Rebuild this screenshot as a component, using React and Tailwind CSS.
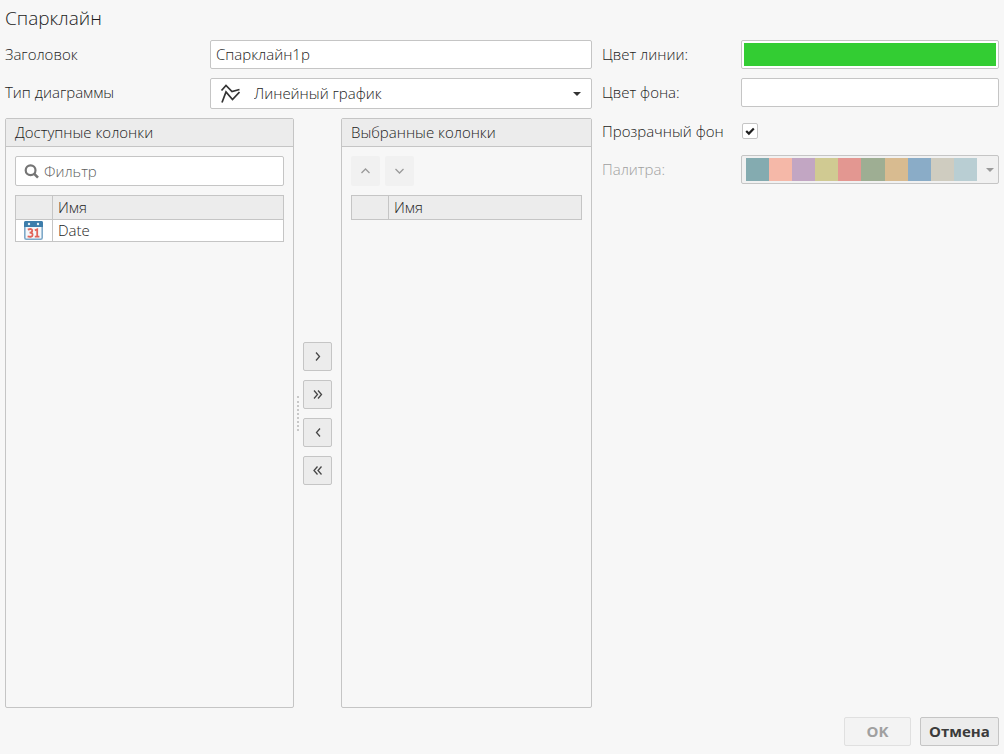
import { useState } from "react";

const paletteColors = [
  "bg-[#84abb0]",
  "bg-[#f5b8a8]",
  "bg-[#c2a6c3]",
  "bg-[#d0ca92]",
  "bg-[#e39791]",
  "bg-[#9eae93]",
  "bg-[#d8bb90]",
  "bg-[#8aacc7]",
  "bg-[#cfccc0]",
  "bg-[#b9ced3]",
];

const arrows = {
  right: "M5 3.5 L8.5 7.5 L5 11.5",
  doubleRight: "M3 3.5 L6.5 7.5 L3 11.5 M7 3.5 L10.5 7.5 L7 11.5",
  left: "M9 3.5 L5.5 7.5 L9 11.5",
  doubleLeft: "M6.5 3.5 L3 7.5 L6.5 11.5 M10.5 3.5 L7 7.5 L10.5 11.5",
  up: "M2.5 9 L6.5 5 L10.5 9",
  down: "M2.5 5 L6.5 9 L10.5 5",
};

const Arrow = ({ name }) => (
  <svg width="14" height="14" viewBox="0 0 14 14" fill="none" stroke="currentColor" strokeWidth="1.3">
    <path d={arrows[name]} />
  </svg>
);

const Caret = () => (
  <svg width="8" height="4" viewBox="0 0 8 4" fill="currentColor">
    <path d="M0 0 H8 L4 4 Z" />
  </svg>
);

const SearchIcon = () => (
  <svg width="15" height="15" viewBox="0 0 15 15" fill="none" stroke="currentColor" strokeWidth="2.2">
    <circle cx="6.6" cy="6.2" r="4.9" />
    <path d="M10 9.6 L14 13.6" strokeWidth="2.6" />
  </svg>
);

const LineChartIcon = () => (
  <svg width="20" height="20" viewBox="0 0 20 20" fill="none" stroke="currentColor" strokeWidth="1.7">
    <path d="M1.5 6.5 L6 1.5 L12 7.5 L19.5 5.5" />
    <path d="M2 18.5 L6 8 L12.5 15.5 L19.5 8" />
  </svg>
);

const CalendarIcon = () => (
  <svg className="mx-auto" width="19" height="19" viewBox="0 0 19 19">
    <rect x="0.8" y="0.8" width="17.4" height="17.4" rx="1.5" fill="#f4f7fa" stroke="#7fa9c9" strokeWidth="1.6" />
    <path d="M0 1.5 Q0 0 1.5 0 H17.5 Q19 0 19 1.5 V6 H0 Z" fill="#3d7dab" />
    <circle cx="5" cy="3" r="1.2" fill="#e8f0f6" />
    <circle cx="14" cy="3" r="1.2" fill="#e8f0f6" />
    <path
      d="M3.8 8.6 Q8.2 7 8.2 9.7 Q8.2 11.6 5.6 11.7 Q8.8 11.8 8.6 13.8 Q8.3 16.6 3.6 15.4"
      fill="none"
      stroke="#e2645a"
      strokeWidth="1.8"
    />
    <path d="M10.8 9.4 L13.2 8.3 V15.8 M10.8 15.7 H15.4" fill="none" stroke="#e2645a" strokeWidth="1.8" />
  </svg>
);

const MoveButton = ({ name, label }) => (
  <button
    type="button"
    aria-label={label}
    className="flex h-[29px] w-[29px] items-center justify-center rounded-xs border border-[#c5c5c5] bg-[#ececec] text-[#474747]"
  >
    <Arrow name={name} />
  </button>
);

const SortButton = ({ name, label }) => (
  <button
    type="button"
    disabled
    aria-label={label}
    className="flex h-[30px] w-[29px] items-center justify-center rounded-xs bg-[#f1f1f1] text-[#9a9a9a]"
  >
    <Arrow name={name} />
  </button>
);

const ColumnTable = ({ rows }) => (
  <table className="w-full table-fixed border-collapse border border-[#c5c5c5] text-left">
    <thead>
      <tr className="h-6 bg-[#ececec]">
        <th className="w-[37px] border border-[#c5c5c5]"></th>
        <th className="border border-[#c5c5c5] px-[5px] leading-[21px] font-light">Имя</th>
      </tr>
    </thead>
    <tbody>
      {rows.map((row) => (
        <tr key={row} className="bg-white">
          <td className="border border-[#c5c5c5] pr-[2px]">
            <CalendarIcon />
          </td>
          <td className="border border-[#c5c5c5] px-[5px] leading-[21px]">{row}</td>
        </tr>
      ))}
    </tbody>
  </table>
);

const Panel = ({ title, className, children }) => (
  <section className={`flex flex-col rounded-xs border border-[#c5c5c5] ${className}`}>
    <h2 className="border-b border-[#c5c5c5] bg-[#ececec] px-[9px] leading-[27px]">{title}</h2>
    <div className="flex flex-col gap-[9px] p-[9px]">{children}</div>
  </section>
);

const App = () => {
  const [title, setTitle] = useState("Спарклайн1р");
  const [filter, setFilter] = useState("");
  const [lineColor, setLineColor] = useState("#33cd33");
  const [background, setBackground] = useState("#ffffff");
  const [transparent, setTransparent] = useState(true);

  const field = "w-full rounded-xs border border-[#c5c5c5] bg-white";
  const colorField =
    "block h-[29px] w-full rounded-xs border border-[#c5c5c5] bg-white p-[2px] [&::-webkit-color-swatch]:rounded-none [&::-webkit-color-swatch]:border-0 [&::-webkit-color-swatch-wrapper]:p-0";

  return (
    <form className="flex h-screen flex-col bg-[#f7f7f7] px-[5px] pb-2 font-['Open_Sans',sans-serif] text-[15px] font-light text-[#1c1c1c]">
      <h1 className="h-10 text-[19px] leading-[37px]">Спарклайн</h1>

      <div className="flex min-h-0 flex-1 gap-[10px]">
        <div className="flex flex-1 flex-col gap-[9px]">
          <div className="flex h-[29px] items-center">
            <label htmlFor="title" className="w-[205px]">Заголовок</label>
            <div className="flex-1">
              <input
                id="title"
                value={title}
                onChange={(e) => setTitle(e.target.value)}
                className={`${field} block h-[29px] px-[5px] pb-[2px]`}
              />
            </div>
          </div>

          <div className="flex h-[31px]">
            <label htmlFor="type" className="w-[205px] leading-[29px]">Тип диаграммы</label>
            <div className="relative flex-1">
              <select id="type" className={`${field} block h-[31px] appearance-none pl-[43px]`}>
                <option>Линейный график</option>
              </select>
              <span className="pointer-events-none absolute inset-y-0 left-[10px] flex items-center text-[#333333]">
                <LineChartIcon />
              </span>
              <span className="pointer-events-none absolute inset-y-0 right-[11px] flex items-center text-[#333333]">
                <Caret />
              </span>
            </div>
          </div>

          <div className="flex min-h-0 flex-1">
            <Panel title="Доступные колонки" className="w-[289px]">
              <div className="relative">
                <input
                  aria-label="Фильтр"
                  placeholder="Фильтр"
                  value={filter}
                  onChange={(e) => setFilter(e.target.value)}
                  className={`${field} block h-[30px] pr-2 pl-7 placeholder:text-[#606060]`}
                />
                <span className="pointer-events-none absolute inset-y-0 left-[9px] flex items-center text-[#757575]">
                  <SearchIcon />
                </span>
              </div>
              <ColumnTable rows={["Date"]} />
            </Panel>

            <div className="flex w-[47px] items-center gap-1 pl-[3px]">
              <div className="h-[35px] border-l-2 border-dotted border-[#c8c8c8]"></div>
              <div className="flex flex-col gap-[9px]">
                <MoveButton name="right" label="Добавить" />
                <MoveButton name="doubleRight" label="Добавить все" />
                <MoveButton name="left" label="Убрать" />
                <MoveButton name="doubleLeft" label="Убрать все" />
              </div>
            </div>

            <Panel title="Выбранные колонки" className="flex-1">
              <div className="flex gap-[5px]">
                <SortButton name="up" label="Вверх" />
                <SortButton name="down" label="Вниз" />
              </div>
              <ColumnTable rows={[]} />
            </Panel>
          </div>
        </div>

        <div className="flex w-[397px] flex-col gap-[9px]">
          <div className="flex h-[29px] items-center">
            <label htmlFor="line-color" className="w-[139px]">Цвет линии:</label>
            <div className="flex-1">
              <input
                id="line-color"
                type="color"
                value={lineColor}
                onChange={(e) => setLineColor(e.target.value)}
                className={colorField}
              />
            </div>
          </div>

          <div className="flex h-[29px] items-center">
            <label htmlFor="background" className="w-[139px]">Цвет фона:</label>
            <div className="flex-1">
              <input
                id="background"
                type="color"
                value={background}
                onChange={(e) => setBackground(e.target.value)}
                className={colorField}
              />
            </div>
          </div>

          <div className="flex h-[30px] items-center">
            <label htmlFor="transparent" className="w-[140px]">Прозрачный фон</label>
            <div className="relative">
              <input
                id="transparent"
                type="checkbox"
                checked={transparent}
                onChange={(e) => setTransparent(e.target.checked)}
                className="block h-4 w-4 appearance-none rounded-xs border border-[#c5c5c5] bg-white"
              />
              {transparent && (
                <svg
                  className="pointer-events-none absolute inset-0"
                  width="16"
                  height="16"
                  viewBox="0 0 16 16"
                  fill="none"
                  stroke="#1f1f1f"
                  strokeWidth="2.2"
                >
                  <path d="M4.2 8 L6.9 10.6 L11.8 5.6" />
                </svg>
              )}
            </div>
          </div>

          <div className="flex h-[29px] items-center">
            <label htmlFor="palette" className="w-[139px] text-[#a0a0a0]">Палитра:</label>
            <div className="relative flex-1">
              <select
                id="palette"
                disabled
                className="block h-[29px] w-full appearance-none rounded-xs border border-[#c5c5c5] bg-[#f1f1f1]"
              ></select>
              <div className="pointer-events-none absolute inset-y-[3px] right-[22px] left-[5px] flex">
                {paletteColors.map((color) => (
                  <span key={color} className={`flex-1 ${color}`}></span>
                ))}
              </div>
              <span className="pointer-events-none absolute inset-y-0 right-[5px] flex items-center text-[#9a9a9a]">
                <Caret />
              </span>
            </div>
          </div>
        </div>
      </div>

      <div className="mt-[9px] flex justify-end gap-[9px] font-bold text-[#3b3b3b]">
        <button type="button" disabled className="h-[29px] w-[67px] rounded-xs border border-[#e0e0e0] bg-[#f3f3f3] text-[#a0a0a0]">
          OK
        </button>
        <button type="button" className="h-[29px] w-[79px] rounded-xs border border-[#c5c5c5] bg-[#ececec]">
          Отмена
        </button>
      </div>
    </form>
  );
};

export default App;
